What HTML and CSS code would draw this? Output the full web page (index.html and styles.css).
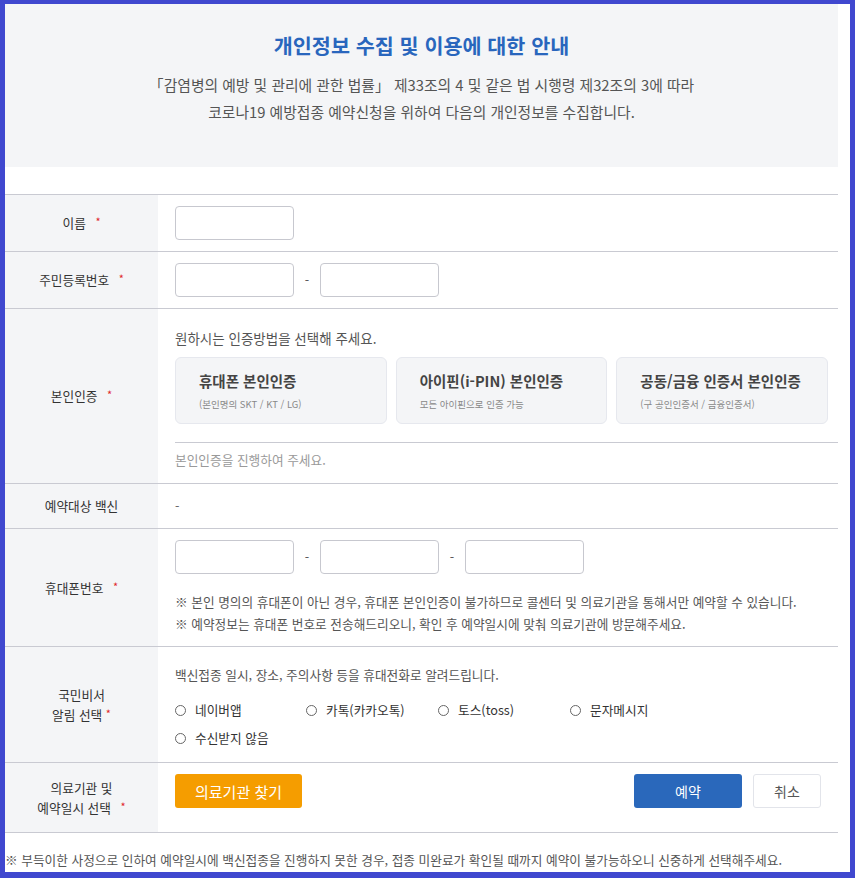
FILE: index.html
```html
<!DOCTYPE html>
<html lang="ko">

<head>
    <meta charset="UTF-8">
    <title>예방접종 사전예약</title>
    <link rel="stylesheet" href="styles.css">
</head>

<body>

    <div class="page">
        <div class="content">

            <section class="intro">
                <h2 class="intro-title">개인정보 수집 및 이용에 대한 안내</h2>
                <p class="intro-text">「감염병의 예방 및 관리에 관한 법률」 제33조의 4 및 같은 법 시행령 제32조의 3에 따라<br>
                    코로나19 예방접종 예약신청을 위하여 다음의 개인정보를 수집합니다.</p>
            </section>

            <div class="form-table">
                <div class="row">
                    <div class="label"><span>이름 <em class="req">*</em></span></div>
                    <div class="field">
                        <input type="text" class="box">
                    </div>
                </div>

                <div class="row">
                    <div class="label"><span>주민등록번호 <em class="req">*</em></span></div>
                    <div class="field">
                        <div class="inputs">
                            <input type="text" class="box">
                            <span class="dash">-</span>
                            <input type="password" class="box">
                        </div>
                    </div>
                </div>

                <div class="row">
                    <div class="label"><span>본인인증 <em class="req">*</em></span></div>
                    <div class="field field-auth">
                        <p class="guide">원하시는 인증방법을 선택해 주세요.</p>
                        <div class="auth-cards">
                            <button class="auth-card">
                                <strong>휴대폰 본인인증</strong>
                                <small>(본인명의 SKT / KT / LG)</small>
                            </button>
                            <button class="auth-card">
                                <strong>아이핀(i-PIN) 본인인증</strong>
                                <small>모든 아이핀으로 인증 가능</small>
                            </button>
                            <button class="auth-card">
                                <strong>공동/금융 인증서 본인인증</strong>
                                <small>(구 공인인증서 / 금융인증서)</small>
                            </button>
                        </div>
                        <p class="auth-status">본인인증을 진행하여 주세요.</p>
                    </div>
                </div>

                <div class="row">
                    <div class="label"><span>예약대상 백신</span></div>
                    <div class="field">
                        <p class="plain">-</p>
                    </div>
                </div>

                <div class="row">
                    <div class="label"><span>휴대폰번호 <em class="req">*</em></span></div>
                    <div class="field">
                        <div class="inputs">
                            <input type="text" class="box">
                            <span class="dash">-</span>
                            <input type="text" class="box">
                            <span class="dash">-</span>
                            <input type="text" class="box">
                        </div>
                        <ul class="notes">
                            <li>※ 본인 명의의 휴대폰이 아닌 경우, 휴대폰 본인인증이 불가하므로 콜센터 및 의료기관을 통해서만 예약할 수 있습니다.</li>
                            <li>※ 예약정보는 휴대폰 번호로 전송해드리오니, 확인 후 예약일시에 맞춰 의료기관에 방문해주세요.</li>
                        </ul>
                    </div>
                </div>

                <div class="row">
                    <div class="label"><span>국민비서<br>알림 선택 <em class="req tight">*</em></span></div>
                    <div class="field field-alarm">
                        <p class="guide guide-alarm">백신접종 일시, 장소, 주의사항 등을 휴대전화로 알려드립니다.</p>
                        <div class="radios">
                            <label class="radio"><input type="radio" name="alarm"><i></i>네이버앱</label>
                            <label class="radio"><input type="radio" name="alarm"><i></i>카톡(카카오톡)</label>
                            <label class="radio"><input type="radio" name="alarm"><i></i>토스(toss)</label>
                            <label class="radio"><input type="radio" name="alarm"><i></i>문자메시지</label>
                            <label class="radio"><input type="radio" name="alarm"><i></i>수신받지 않음</label>
                        </div>
                    </div>
                </div>

                <div class="row row-last">
                    <div class="label"><span>의료기관 및<br>예약일시 선택 <em class="req">*</em></span></div>
                    <div class="field">
                        <div class="actions">
                            <button class="btn btn-find">의료기관 찾기</button>
                            <div class="actions-right">
                                <button class="btn btn-submit">예약</button>
                                <button class="btn btn-cancel">취소</button>
                            </div>
                        </div>
                    </div>
                </div>
            </div>

            <p class="bottom-note">※ 부득이한 사정으로 인하여 예약일시에 백신접종을 진행하지 못한 경우, 접종 미완료가 확인될 때까지 예약이 불가능하오니 신중하게 선택해주세요.</p>

        </div>
    </div>

</body>

</html>
```

FILE: styles.css
```css
* {
    box-sizing: border-box;
}

html,
body {
    height: 100%;
}

body {
    margin: 0;
    padding: 4px 5px 6px 5px;
    background: #4048cf;
    font-family: "Noto Sans CJK KR", "Noto Sans", sans-serif;
    font-size: 12.7px;
    line-height: 20px;
    color: #333;
}

p,
ul {
    margin: 0;
    padding: 0;
    list-style: none;
}

.page {
    height: 100%;
    background: #fff;
    overflow: hidden;
}

.content {
    width: 833px;
}

/* intro */

.intro {
    background: #f4f5f7;
    padding: 27px 0 42px;
    text-align: center;
    margin-bottom: 27px;
}

.intro-title {
    margin: 0;
    font-size: 20.7px;
    line-height: 28px;
    font-weight: 700;
    color: #2966bd;
}

.intro-text {
    margin-top: 12px;
    font-size: 14.8px;
    line-height: 27px;
    color: #555;
}

/* form table */

.form-table {
    border-bottom: 1px solid #c9cad2;
}

.row {
    display: grid;
    grid-template-columns: 153px 1fr;
    border-top: 1px solid #c9cad2;
}

.label {
    background: #f4f5f7;
    display: flex;
    align-items: center;
    justify-content: center;
    text-align: center;
    line-height: 20px;
    color: #333;
}

.req {
    font-style: normal;
    color: #e0262b;
    margin-left: 6px;
    font-size: 11px;
    position: relative;
    top: -2px;
}

.req.tight {
    margin-left: 0;
}

.field {
    padding: 11px 10px 11px 17px;
}

.inputs {
    display: flex;
    align-items: center;
}

.box {
    width: 119px;
    height: 34px;
    border: 1px solid #c7c8cf;
    border-radius: 4px;
    background: #fff;
    margin: 0;
}

.dash {
    width: 26px;
    text-align: center;
    color: #555;
}

.guide {
    font-size: 13.5px;
    color: #555;
    line-height: 20px;
    margin-top: 8px;
}

.field-auth {
    padding-bottom: 13px;
}

.auth-cards {
    display: grid;
    grid-template-columns: repeat(3, 1fr);
    gap: 9px;
    margin-top: 9px;
}

.auth-card {
    height: 67px;
    display: flex;
    flex-direction: column;
    justify-content: center;
    align-items: flex-start;
    padding: 0 12px 0 23px;
    background: #f4f5f7;
    border: 1px solid #e6e8ee;
    border-radius: 6px;
    font-family: inherit;
    white-space: nowrap;
    cursor: pointer;
}

.auth-card strong {
    font-size: 14.5px;
    line-height: 24px;
    font-weight: 700;
    color: #444;
}

.auth-card small {
    font-size: 9.5px;
    line-height: 16px;
    color: #888;
    margin-top: 3px;
}

.auth-status {
    margin: 18px -10px 0 0;
    padding-top: 7px;
    border-top: 1px solid #c9cad2;
    color: #999;
}

.plain {
    line-height: 22px;
    color: #666;
}

.notes {
    margin-top: 17px;
    color: #555;
}

.notes li {
    line-height: 22px;
}

.field-alarm {
    padding-bottom: 10px;
}

.guide-alarm {
    font-size: 12.7px;
    margin-top: 6px;
    line-height: 22px;
}

.radios {
    display: grid;
    grid-template-columns: 131px 132px 132px 132px;
    margin-top: 10px;
}

.radio {
    display: flex;
    align-items: center;
    height: 28px;
    color: #333;
    cursor: pointer;
}

.radio input {
    display: none;
}

.radio i {
    width: 11px;
    height: 11px;
    border: 1px solid #666;
    border-radius: 50%;
    margin-right: 9px;
}

.row-last {
    min-height: 70px;
}

.actions {
    display: flex;
    align-items: center;
    justify-content: space-between;
}

.actions-right {
    display: flex;
    gap: 11px;
    margin-right: 7px;
}

.btn {
    height: 34px;
    border-radius: 3px;
    border: 1px solid transparent;
    font-family: inherit;
    cursor: pointer;
}

.btn-find {
    width: 127px;
    background: #f59d00;
    color: #fff;
    font-size: 15px;
}

.btn-submit {
    width: 108px;
    background: #2a68bb;
    color: #fff;
    font-size: 14px;
}

.btn-cancel {
    width: 68px;
    background: #fff;
    border-color: #e2e4ea;
    color: #555;
    font-size: 14px;
}

.bottom-note {
    margin-top: 17px;
    color: #555;
}
```
